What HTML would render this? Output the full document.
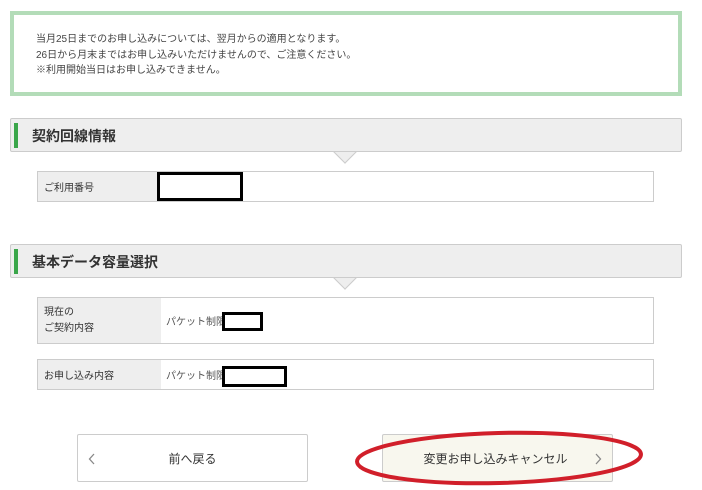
<!DOCTYPE html>
<html><head><meta charset="utf-8"><style>
body{margin:0;width:702px;height:490px;background:#fff;font-family:"Liberation Sans","Noto Sans CJK JP",sans-serif;position:relative;overflow:hidden;color:#333}
.a{position:absolute;box-sizing:border-box}
.note{left:10px;top:11px;width:672px;height:85px;border:4px solid #b3dcb8;font-size:10px;line-height:15.5px;padding:17px 0 0 22px;color:#444}
.hd{left:10px;width:672px;height:34px;background:#eee;border:1px solid #ccc;border-radius:2px;font-size:14px;font-weight:bold;padding:7px 0 0 21px;color:#333}
.hd:before{content:"";position:absolute;left:3px;top:4px;width:4px;height:25px;background:#3aa64a}
.tri{width:18px;height:18px;background:#eee;border-right:1px solid #ccc;border-bottom:1px solid #ccc;transform:rotate(45deg)}
.row{left:37px;width:617px;border:1px solid #ccc;background:#fff;font-size:10px}
.lb{position:absolute;box-sizing:border-box;left:0;top:0;bottom:0;background:#eee;padding-left:6px;display:flex;align-items:center;font-size:10px}
.v{position:absolute;display:flex;align-items:center;top:0;bottom:0;color:#555}
.blk{border:3px solid #000;background:#fff}
.btn{top:434px;width:231px;height:48px;border:1px solid #ccc;border-radius:2px;font-size:12px;display:flex;align-items:center;justify-content:center;color:#333}
.btn svg{position:absolute;top:18px}
</style></head><body>
<div class="a note">当月25日までのお申し込みについては、翌月からの適用となります。<br>26日から月末まではお申し込みいただけませんので、ご注意ください。<br>※利用開始当日はお申し込みできません。</div>

<div class="a tri" style="left:336px;top:142px"></div>
<div class="a hd" style="top:118px">契約回線情報</div>
<div class="a row" style="top:171px;height:31px"><div class="lb" style="width:120px">ご利用番号</div></div>
<div class="a blk" style="left:157px;top:172px;width:86px;height:29px"></div>

<div class="a tri" style="left:336px;top:268px"></div>
<div class="a hd" style="top:244px">基本データ容量選択</div>
<div class="a row" style="top:297px;height:47px"><div class="lb" style="width:123px;line-height:16px">現在の<br>ご契約内容</div><div class="v" style="left:128px">パケット制限</div></div>
<div class="a blk" style="left:222px;top:312px;width:41px;height:19px"></div>
<div class="a row" style="top:359px;height:31px"><div class="lb" style="width:123px">お申し込み内容</div><div class="v" style="left:128px">パケット制限</div></div>
<div class="a blk" style="left:222px;top:366px;width:65px;height:21px"></div>

<div class="a btn" style="left:77px;background:#fff"><svg style="left:10px" width="8" height="12"><path d="M6 1 L1.5 6 L6 11" fill="none" stroke="#888" stroke-width="1.3"/></svg>前へ戻る</div>
<div class="a btn" style="left:382px;background:#f8f7ee;padding-right:4px"><svg style="right:10px" width="8" height="12"><path d="M2 1 L6.5 6 L2 11" fill="none" stroke="#888" stroke-width="1.3"/></svg>変更お申し込みキャンセル</div>
<svg class="a" style="left:0;top:0" width="702" height="490"><ellipse cx="499" cy="458" rx="142" ry="25" transform="rotate(-1.5 499 458)" fill="none" stroke="#d11f2a" stroke-width="4"/></svg>
</body></html>
